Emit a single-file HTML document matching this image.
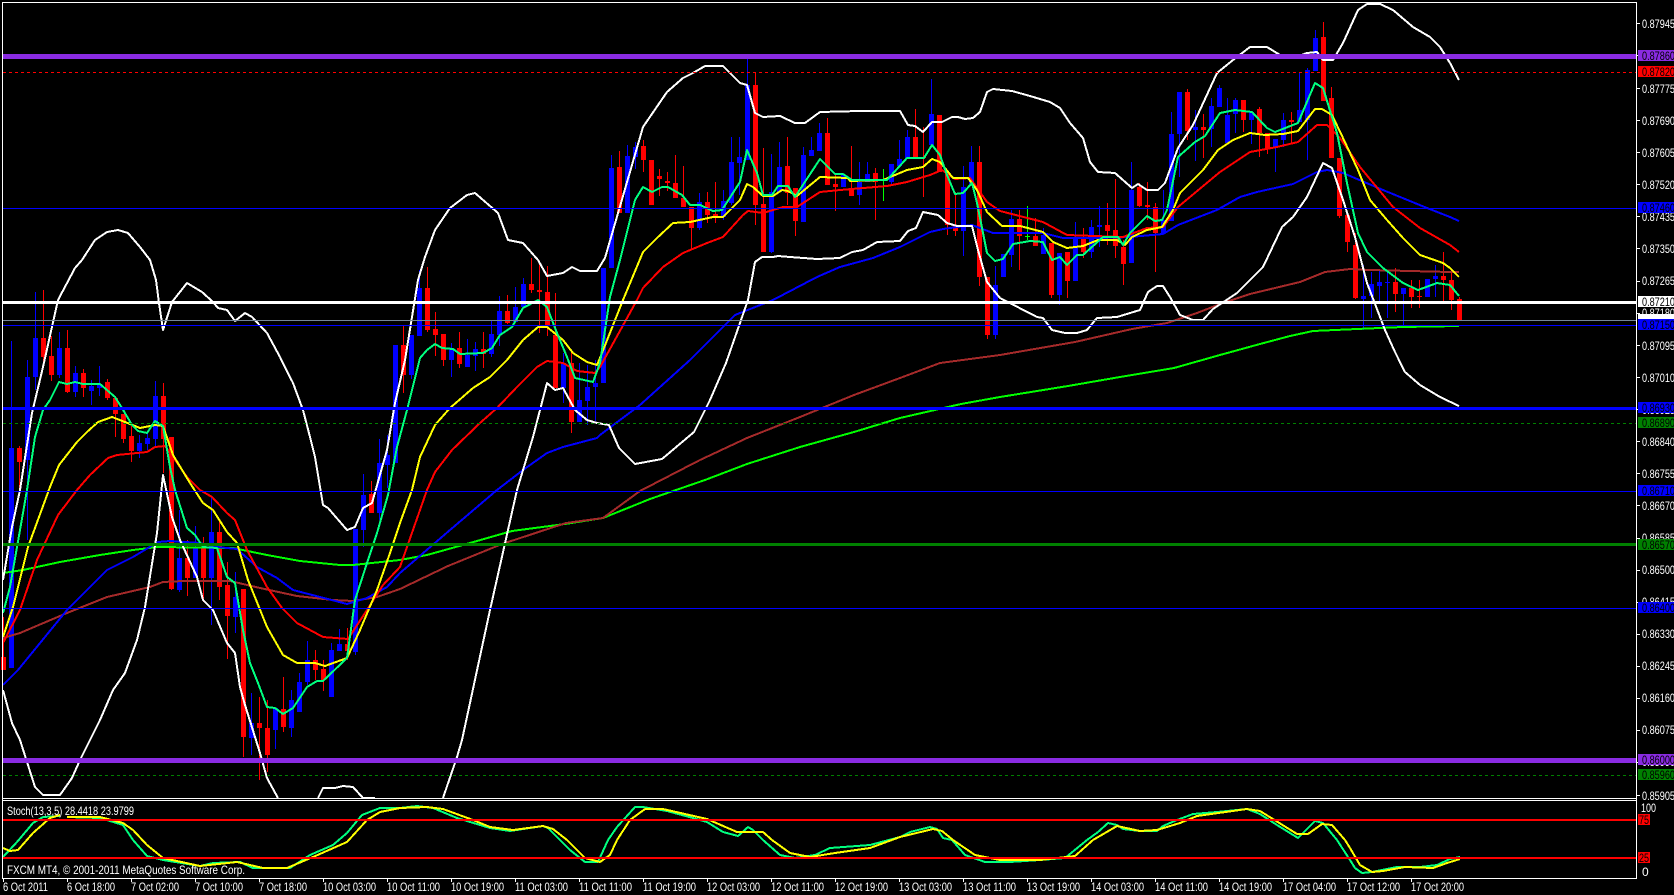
<!DOCTYPE html>
<html><head><meta charset="utf-8"><title>Chart</title>
<style>
html,body{margin:0;padding:0;background:#000;width:1674px;height:895px;overflow:hidden}
svg{display:block}
text{font-family:"Liberation Sans",sans-serif;font-size:12px;fill:#fff}
.k{fill:#000}
.l{fill:none;stroke-width:2;shape-rendering:crispEdges;stroke-linejoin:round}
.h{shape-rendering:crispEdges}
</style></head><body>
<svg width="1674" height="895" viewBox="0 0 1674 895" xmlns="http://www.w3.org/2000/svg">
<rect width="1674" height="895" fill="#000"/>
<!-- wicks -->
<path class="h" fill="none" stroke="#00f" stroke-width="1" d="M11.5 341V668M27.5 360V540M35.5 292V390M59.5 332V378M75.5 366V397M91.5 380V405M99.5 366V396M139.5 435V458M147.5 432V450M155.5 381V447M179.5 510V592M195.5 526V578M211.5 497V625M235.5 572V633M251.5 693V755M275.5 708V749M291.5 690V737M299.5 673V712M307.5 641V685M331.5 643V697M339.5 629V651M355.5 529V655M363.5 474V547M379.5 439V520M387.5 435V488M395.5 345V463M411.5 335V379M419.5 270V336M451.5 343V377M467.5 339V367M475.5 342V371M491.5 321V357M499.5 296V346M515.5 287V322M523.5 278V307M563.5 353V403M579.5 363V422M587.5 365V425M595.5 360V421M603.5 268V383M611.5 155V268M627.5 145V213M635.5 142V169M699.5 193V230M723.5 190V220M731.5 137V205M739.5 137V195M747.5 59V160M771.5 154V253M779.5 142V192M803.5 147V222M811.5 137V156M819.5 123V151M843.5 175V187M859.5 162V205M867.5 162V182M891.5 164V185M899.5 140V166M907.5 130V159M931.5 79V145M963.5 166V256M971.5 146V184M995.5 266V339M1003.5 254V277M1011.5 210V267M1043.5 228V254M1059.5 253V305M1075.5 222V281M1091.5 220V258M1099.5 206V247M1131.5 162V263M1163.5 190V233M1171.5 112V221M1179.5 92V177M1195.5 110V161M1211.5 98V147M1219.5 85V107M1227.5 98V143M1235.5 98V133M1251.5 112V144M1275.5 139V172M1283.5 113V147M1299.5 73V122M1307.5 68V160M1315.5 30V71M1363.5 265V330M1371.5 272V318M1379.5 271V303M1387.5 271V318M1403.5 288V325M1427.5 279V297M1435.5 265V297"/>
<path class="h" fill="none" stroke="#f00" stroke-width="1" d="M3.5 617V670M19.5 446V492M43.5 290V367M51.5 336V381M67.5 330V393M83.5 369V397M107.5 379V400M115.5 396V437M123.5 414V443M131.5 426V462M163.5 383V473M171.5 437V590M187.5 540V596M203.5 537V602M219.5 520V600M227.5 562V659M243.5 589V757M259.5 697V780M267.5 700V772M283.5 677V732M315.5 650V680M323.5 660V691M347.5 628V660M371.5 481V513M403.5 326V393M427.5 267V332M435.5 312V356M443.5 334V366M459.5 332V368M483.5 332V368M507.5 295V324M531.5 258V293M539.5 263V333M547.5 266V336M555.5 293V388M571.5 350V433M619.5 151V213M643.5 140V172M651.5 160V205M659.5 169V196M667.5 172V191M675.5 155V198M683.5 166V207M691.5 207V250M707.5 192V223M715.5 182V223M755.5 72V225M763.5 148V252M787.5 137V205M795.5 188V236M827.5 118V185M835.5 175V211M851.5 146V196M875.5 168V220M915.5 109V157M923.5 127V197M939.5 115V172M947.5 172V235M955.5 192V236M979.5 146V286M987.5 277V339M1019.5 210V270M1035.5 218V246M1051.5 243V298M1067.5 252V298M1083.5 228V258M1107.5 203V245M1115.5 179V258M1123.5 240V285M1139.5 183V207M1147.5 182V220M1155.5 203V272M1187.5 89V140M1203.5 114V158M1243.5 100V132M1259.5 107V157M1267.5 133V154M1291.5 112V143M1323.5 22V101M1331.5 87V158M1339.5 158V218M1347.5 215V252M1355.5 233V299M1395.5 268V312M1411.5 280V308M1419.5 280V308M1443.5 252V303M1451.5 270V310M1459.5 297V320"/>
<path class="h" fill="none" stroke="#0f0" stroke-width="1" d="M883.5 169V201M1027.5 206V240"/>
<!-- bodies -->
<path class="h" fill="none" stroke="#00f" stroke-width="5" d="M11.5 448V668M27.5 377V460M35.5 338V377M59.5 348V375M75.5 373V392M91.5 386V391M99.5 384V388M139.5 443V451M147.5 438V444M155.5 396V439M179.5 558V590M195.5 547V578M211.5 532V578M235.5 597V617M251.5 723V738M275.5 708V730M291.5 700V728M299.5 682V712M307.5 660V682M331.5 650V697M339.5 644V651M355.5 529V652M363.5 495V530M379.5 463V513M387.5 455V465M395.5 345V463M411.5 335V375M419.5 288V336M451.5 348V360M467.5 355V367M475.5 349V356M491.5 334V354M499.5 311V335M515.5 307V322M523.5 284V307M563.5 363V388M579.5 400V422M587.5 387V401M595.5 383V387M603.5 268V383M611.5 168V268M627.5 156V213M635.5 147V157M699.5 202V228M723.5 201V217M731.5 162V203M739.5 157V163M747.5 85V160M771.5 192V252M779.5 167V192M803.5 155V222M811.5 150V156M819.5 133V151M843.5 175V187M859.5 182V195M867.5 174V182M891.5 164V182M899.5 159V166M907.5 137V159M931.5 114V145M963.5 187V231M971.5 162V184M995.5 285V335M1003.5 254V277M1011.5 219V255M1043.5 235V254M1059.5 253V295M1075.5 237V281M1091.5 227V252M1099.5 225V227M1131.5 190V263M1163.5 220V233M1171.5 134V221M1179.5 92V134M1195.5 127V130M1211.5 106V129M1219.5 88V107M1227.5 115V143M1235.5 100V114M1251.5 112V120M1275.5 139V148M1283.5 120V140M1299.5 110V122M1307.5 70V120M1315.5 38V71M1363.5 296V299M1371.5 284V296M1379.5 282V286M1387.5 282V283M1403.5 288V294M1427.5 279V297M1435.5 276V279"/>
<path class="h" fill="none" stroke="#f00" stroke-width="5" d="M3.5 657V670M19.5 448V462M43.5 338V357M51.5 356V375M67.5 348V392M83.5 373V388M107.5 382V398M115.5 398V414M123.5 414V439M131.5 436V451M163.5 396V439M171.5 437V589M187.5 558V578M203.5 548V578M219.5 532V587M227.5 585V616M243.5 589V737M259.5 723V728M267.5 728V755M283.5 709V727M315.5 660V670M323.5 669V680M347.5 644V651M371.5 494V513M403.5 345V375M427.5 288V330M435.5 329V335M443.5 334V360M459.5 348V364M483.5 349V354M507.5 311V323M531.5 284V290M539.5 290V292M547.5 292V325M555.5 335V388M571.5 363V422M619.5 167V213M643.5 146V160M651.5 160V205M659.5 176V179M667.5 181V183M675.5 183V198M683.5 198V207M691.5 207V228M707.5 202V215M715.5 214V217M755.5 85V205M763.5 204V252M787.5 166V193M795.5 188V221M827.5 133V185M835.5 184V187M851.5 188V196M875.5 173V182M915.5 137V157M923.5 157V158M939.5 115V172M947.5 172V225M955.5 225V231M979.5 162V277M987.5 277V335M1019.5 219V236M1035.5 236V246M1051.5 243V295M1067.5 252V281M1083.5 237V252M1107.5 225V231M1115.5 230V246M1123.5 247V264M1139.5 187V206M1147.5 205V207M1155.5 207V233M1187.5 92V131M1203.5 127V130M1243.5 100V120M1259.5 109V133M1267.5 133V149M1291.5 120V122M1323.5 37V101M1331.5 98V158M1339.5 158V216M1347.5 215V242M1355.5 245V298M1395.5 282V294M1411.5 288V297M1419.5 296V297M1443.5 276V280M1451.5 280V300M1459.5 299V320"/>
<path class="h" fill="none" stroke="#0f0" stroke-width="5" d="M883.5 180V181M1027.5 236V237"/>
<!-- Lime SMA -->
<polyline class="l" stroke="#0f0" points="3,573 23,570 60,562 100,555 133,550 157,547 233,548 267,555 300,561 340,565 353,565 400,560 427,555 470,543 512,531 565,524 603,518 650,499 705,480 747,464 800,447 854,432 900,418 961,404 1000,397 1068,386 1120,377 1174,368 1220,355 1260,344 1290,336 1313,331 1357,329 1403,327 1459,326"/>
<!-- Brown -->
<polyline class="l" stroke="#a52a2a" points="3,638 20,633 67,613 107,597 150,587 163,582 183,581 230,581 260,588 297,596 333,600 353,601 377,597 400,589 448,566 502,544 566,523 603,518 640,491 700,460 747,438 800,417 854,395 900,378 940,363 1000,355 1075,342 1132,329 1167,323 1197,313 1223,303 1250,294 1300,282 1325,272 1350,269 1370,270 1450,272 1459,272"/>
<!-- Blue MA -->
<polyline class="l" stroke="#00f" points="3,685 18,670 67,610 107,570 133,557 158,542 170,541 200,543 217,547 237,549 257,567 277,578 293,590 320,597 347,604 367,598 387,587 400,573 450,530 497,490 523,470 547,453 563,447 597,438 600,435 640,405 690,360 735,315 773,300 817,277 840,267 873,258 900,247 930,232 943,229 972,225 993,233 1043,233 1063,238 1100,238 1130,237 1163,234 1178,225 1217,210 1240,197 1257,192 1293,184 1317,172 1327,170 1343,173 1383,190 1427,208 1450,217 1459,221"/>
<!-- Red MA -->
<polyline class="l" stroke="#f00" points="3,643 20,610 37,560 58,515 77,490 90,475 108,458 117,455 147,452 155,447 165,446 173,457 187,477 200,490 212,497 227,513 235,520 247,550 267,587 282,608 297,623 323,637 348,639 367,610 383,585 400,567 427,490 435,472 452,450 480,423 497,408 517,387 537,367 547,361 563,363 577,371 595,373 600,367 637,300 643,288 663,267 683,253 707,243 723,237 743,215 748,211 763,213 783,207 797,207 820,192 840,190 887,186 907,182 930,175 942,170 955,179 970,178 987,202 1000,211 1043,222 1067,235 1123,237 1147,228 1163,227 1178,207 1220,172 1250,152 1277,147 1298,142 1317,125 1327,125 1340,138 1360,167 1393,207 1420,228 1450,245 1459,252"/>
<!-- Yellow -->
<polyline class="l" stroke="#ff0" points="3,637 13,607 28,547 50,487 59,465 77,442 87,432 98,422 112,417 125,422 140,428 155,425 163,426 173,455 190,483 203,503 213,510 227,532 237,543 248,580 267,627 283,655 297,663 315,663 325,666 347,658 360,630 377,590 390,553 400,523 412,490 420,457 435,425 450,408 473,388 490,377 507,360 523,340 538,327 547,327 563,340 573,353 587,362 597,365 600,358 623,300 643,252 657,238 673,223 690,222 713,217 723,217 740,200 747,184 753,187 763,196 773,196 782,190 788,191 797,196 820,177 848,178 850,181 883,180 907,170 923,167 932,159 940,162 953,178 968,178 977,190 987,212 1002,226 1020,226 1043,232 1053,242 1067,248 1083,246 1098,240 1117,240 1125,245 1132,237 1147,230 1162,227 1173,210 1180,193 1203,170 1218,150 1233,140 1250,133 1265,135 1283,134 1298,131 1315,109 1322,109 1332,115 1343,138 1358,170 1370,200 1387,220 1403,238 1420,255 1443,263 1450,268 1459,277"/>
<!-- Spring green -->
<polyline class="l" stroke="#00ff7f" points="3,613 10,587 20,530 27,490 35,437 43,410 50,400 59,382 67,384 75,382 83,384 100,384 115,397 122,408 132,425 138,431 147,433 155,421 163,426 170,467 175,490 187,528 195,535 203,547 217,548 227,577 235,583 243,630 250,663 258,683 267,707 275,708 283,714 293,708 307,687 317,681 323,681 347,658 355,600 367,563 377,533 388,495 397,447 407,410 420,358 427,350 435,344 442,348 453,349 460,354 483,353 492,348 500,335 512,327 523,308 538,300 547,307 557,333 567,357 575,378 593,382 600,363 610,297 620,260 635,200 643,187 652,192 662,187 668,187 682,195 690,205 700,205 713,211 722,210 740,182 747,150 757,173 763,195 772,195 778,186 788,186 795,197 820,159 835,174 843,174 852,180 887,180 907,158 924,158 932,145 940,155 947,175 955,194 963,193 972,183 977,203 987,253 995,261 1003,259 1013,244 1030,241 1043,242 1052,260 1060,257 1067,265 1077,255 1083,255 1103,237 1118,237 1123,245 1130,233 1147,216 1155,221 1162,220 1167,210 1178,157 1195,142 1205,136 1220,113 1235,110 1252,112 1267,128 1275,132 1298,123 1315,83 1323,88 1337,133 1347,183 1358,233 1367,252 1383,268 1403,283 1418,290 1437,283 1450,285 1459,296"/>
<!-- Bollinger upper -->
<polyline class="l" stroke="#fff" points="3,580 12,527 20,490 32,413 43,367 58,300 75,268 82,260 95,240 107,232 118,230 128,233 140,247 150,260 156,280 159,303 163,330 172,302 187,283 202,292 213,302 218,308 227,310 235,321 245,313 252,317 267,333 280,357 293,383 303,410 310,437 315,457 323,505 328,508 347,530 355,527 363,508 372,503 387,450 395,403 405,360 418,280 425,257 435,230 450,208 467,195 475,193 498,213 508,240 523,243 538,260 547,276 563,273 572,267 580,271 597,271 605,258 643,127 667,92 683,78 693,73 705,66 723,66 740,83 747,85 755,113 763,117 780,116 795,123 805,123 820,112 860,111 900,111 908,125 915,126 923,132 932,122 942,122 952,117 958,117 965,119 973,118 980,112 987,92 993,89 1012,91 1030,96 1050,102 1060,108 1070,123 1083,138 1090,162 1098,172 1115,173 1132,188 1138,184 1147,190 1158,190 1165,183 1178,148 1193,125 1217,73 1233,60 1250,47 1267,47 1280,55 1293,58 1307,53 1317,52 1323,60 1333,60 1343,43 1358,10 1367,4 1380,4 1393,10 1413,27 1430,37 1440,47 1450,63 1459,80"/>
<!-- Bollinger lower -->
<polyline class="l" stroke="#fff" points="3,690 12,723 20,740 35,787 43,795 60,795 72,778 80,760 100,720 113,690 125,673 137,640 145,607 157,533 163,475 172,517 180,540 197,577 203,600 213,610 227,643 235,653 240,687 245,705 260,753 267,778 278,798"/>
<polyline class="l" stroke="#fff" points="318,798 323,788 335,788 343,786 353,787 363,798 375,798"/>
<polyline class="l" stroke="#fff" points="443,798 457,757 462,740 490,610 517,490 533,437 540,410 547,383 555,390 563,388 575,410 587,420 597,423 609,425 619,448 635,464 662,459 694,432 710,400 726,363 748,300 755,262 762,257 773,257 778,256 790,257 817,259 840,258 852,252 863,250 877,242 900,241 908,231 916,228 923,212 938,215 947,223 957,226 972,226 978,250 987,282 1000,298 1037,317 1043,318 1052,330 1065,333 1077,333 1087,330 1097,318 1117,317 1140,310 1148,292 1157,286 1163,286 1170,297 1180,315 1193,320 1203,320 1213,309 1222,303 1237,293 1263,267 1282,227 1293,217 1307,197 1323,163 1332,168 1343,200 1355,237 1367,283 1385,330 1395,352 1405,372 1420,385 1440,397 1459,406"/>
<!-- horizontal lines -->
<g class="h" shape-rendering="crispEdges">
<rect x="3" y="54" width="1633" height="5" fill="#8a2be2"/>
<line x1="3" y1="72.5" x2="1636" y2="72.5" stroke="#f00" stroke-dasharray="3 3"/>
<rect x="3" y="208" width="1633" height="1" fill="#00f"/>
<rect x="3" y="301" width="1633" height="3" fill="#fff"/>
<rect x="3" y="320" width="1633" height="1" fill="#778899"/>
<rect x="3" y="325" width="1633" height="1" fill="#00f"/>
<rect x="3" y="407" width="1633" height="3" fill="#00f"/>
<line x1="3" y1="423.5" x2="1636" y2="423.5" stroke="#008000" stroke-dasharray="3 3"/>
<rect x="3" y="491" width="1633" height="1" fill="#00f"/>
<rect x="3" y="543" width="1633" height="3" fill="#008000"/>
<rect x="3" y="608" width="1633" height="1" fill="#00f"/>
<rect x="3" y="758" width="1633" height="5" fill="#8a2be2"/>
<line x1="3" y1="775.5" x2="1636" y2="775.5" stroke="#008000" stroke-dasharray="3 3"/>
</g>
<!-- stochastic -->
<polyline class="l" stroke="#00ff7f" points="3,857 17,842 33,823 43,817 60,816"/>
<polyline class="l" stroke="#ff0" points="3,848 10,851 18,850 33,833 50,818 60,815"/>
<polyline class="l" stroke="#00ff7f" points="67,817 100,818 110,821 123,825 133,840 147,856 163,860 200,866 213,863 240,862 253,868 290,868 310,855 333,845 347,833 362,815 380,808 400,808 417,806 433,808 457,818 490,828 510,831 543,826 548,828 560,840 570,850 585,862 598,862 608,840 617,827 635,807 643,807 667,811 693,818 707,822 723,832 738,836 748,827 753,830 763,840 780,855 795,858 815,855 830,848 870,845 900,837 910,832 930,827 937,829 943,838 952,840 965,855 985,862 1010,862 1040,860 1065,858 1087,840 1098,832 1108,823 1117,825 1123,829 1140,831 1157,831 1163,826 1177,820 1193,814 1217,812 1247,809 1260,814 1277,825 1298,838 1315,821 1323,823 1337,840 1350,860 1355,868 1362,873 1372,872 1397,867 1420,867 1437,865 1450,859 1460,857"/>
<polyline class="l" stroke="#ff0" points="67,817 100,817 123,823 133,830 147,845 163,858 200,866 237,862 263,868 287,868 313,857 347,842 367,820 380,812 400,808 427,807 443,809 473,820 490,827 513,830 543,826 553,829 567,840 585,858 600,862 610,855 617,840 630,820 645,809 663,809 707,819 737,832 763,832 772,840 790,853 810,857 835,853 870,848 900,837 933,829 942,831 953,840 975,855 1000,860 1040,860 1075,856 1093,840 1117,826 1140,831 1157,830 1180,823 1197,816 1247,809 1260,811 1297,834 1308,834 1322,824 1332,825 1345,840 1350,848 1360,865 1372,872 1383,871 1405,867 1433,868 1447,863 1460,859"/>
<g shape-rendering="crispEdges">
<rect x="3" y="819" width="1633" height="2" fill="#f00"/>
<rect x="3" y="857" width="1633" height="2" fill="#f00"/>
<!-- frame -->
<rect x="2" y="2" width="1635" height="1" fill="#fff"/>
<rect x="2" y="2" width="1" height="877" fill="#fff"/>
<rect x="1636" y="2" width="1" height="877" fill="#fff"/>
<rect x="2" y="798" width="1635" height="1" fill="#fff"/>
<rect x="2" y="800" width="1635" height="1" fill="#fff"/>
<rect x="2" y="878" width="1635" height="1" fill="#fff"/>
<path fill="none" stroke="#fff" d="M1637 23.500H1640M1637 55.500H1640M1637 88.500H1640M1637 120.500H1640M1637 152.500H1640M1637 184.500H1640M1637 216.500H1640M1637 248.500H1640M1637 281.500H1640M1637 313.500H1640M1637 345.500H1640M1637 377.500H1640M1637 409.500H1640M1637 441.500H1640M1637 473.500H1640M1637 505.500H1640M1637 538.500H1640M1637 570.500H1640M1637 602.500H1640M1637 634.500H1640M1637 666.500H1640M1637 698.500H1640M1637 730.500H1640M1637 762.500H1640M1637 795.500H1640"/>
<path fill="none" stroke="#fff" d="M3.500 879V882M67.500 879V882M131.500 879V882M195.500 879V882M259.500 879V882M323.500 879V882M387.500 879V882M451.500 879V882M515.500 879V882M579.500 879V882M643.500 879V882M707.500 879V882M771.500 879V882M835.500 879V882M899.500 879V882M963.500 879V882M1027.500 879V882M1091.500 879V882M1155.500 879V882M1219.500 879V882M1283.500 879V882M1347.500 879V882M1411.500 879V882"/>
</g>
<!-- price scale -->
<g>
<text x="1642" y="28" textLength="33" lengthAdjust="spacingAndGlyphs">0.87945</text>
<text x="1642" y="60" textLength="33" lengthAdjust="spacingAndGlyphs">0.87860</text>
<text x="1642" y="93" textLength="33" lengthAdjust="spacingAndGlyphs">0.87775</text>
<text x="1642" y="125" textLength="33" lengthAdjust="spacingAndGlyphs">0.87690</text>
<text x="1642" y="157" textLength="33" lengthAdjust="spacingAndGlyphs">0.87605</text>
<text x="1642" y="189" textLength="33" lengthAdjust="spacingAndGlyphs">0.87520</text>
<text x="1642" y="221" textLength="33" lengthAdjust="spacingAndGlyphs">0.87435</text>
<text x="1642" y="253" textLength="33" lengthAdjust="spacingAndGlyphs">0.87350</text>
<text x="1642" y="285" textLength="33" lengthAdjust="spacingAndGlyphs">0.87265</text>
<text x="1642" y="317" textLength="33" lengthAdjust="spacingAndGlyphs">0.87180</text>
<text x="1642" y="350" textLength="33" lengthAdjust="spacingAndGlyphs">0.87095</text>
<text x="1642" y="382" textLength="33" lengthAdjust="spacingAndGlyphs">0.87010</text>
<text x="1642" y="414" textLength="33" lengthAdjust="spacingAndGlyphs">0.86925</text>
<text x="1642" y="446" textLength="33" lengthAdjust="spacingAndGlyphs">0.86840</text>
<text x="1642" y="478" textLength="33" lengthAdjust="spacingAndGlyphs">0.86755</text>
<text x="1642" y="510" textLength="33" lengthAdjust="spacingAndGlyphs">0.86670</text>
<text x="1642" y="542" textLength="33" lengthAdjust="spacingAndGlyphs">0.86585</text>
<text x="1642" y="574" textLength="33" lengthAdjust="spacingAndGlyphs">0.86500</text>
<text x="1642" y="606" textLength="33" lengthAdjust="spacingAndGlyphs">0.86415</text>
<text x="1642" y="638" textLength="33" lengthAdjust="spacingAndGlyphs">0.86330</text>
<text x="1642" y="670" textLength="33" lengthAdjust="spacingAndGlyphs">0.86245</text>
<text x="1642" y="702" textLength="33" lengthAdjust="spacingAndGlyphs">0.86160</text>
<text x="1642" y="734" textLength="33" lengthAdjust="spacingAndGlyphs">0.86075</text>
<text x="1642" y="766" textLength="33" lengthAdjust="spacingAndGlyphs">0.85990</text>
<text x="1642" y="800" textLength="33" lengthAdjust="spacingAndGlyphs">0.85905</text>
</g>
<!-- coloured price labels -->
<g shape-rendering="crispEdges">
<rect x="1638" y="50" width="36" height="11" fill="#8a2be2"/>
<rect x="1638" y="66" width="36" height="11" fill="#f00"/>
<rect x="1638" y="202" width="36" height="11" fill="#00f"/>
<rect x="1638" y="296" width="36" height="11" fill="#fff"/>
<rect x="1638" y="314" width="36" height="11" fill="#fff"/>
<rect x="1638" y="319" width="36" height="11" fill="#00f"/>
<rect x="1638" y="402" width="36" height="11" fill="#00f"/>
<rect x="1638" y="417" width="36" height="11" fill="#008000"/>
<rect x="1638" y="485" width="36" height="11" fill="#00f"/>
<rect x="1638" y="539" width="36" height="11" fill="#008000"/>
<rect x="1638" y="602" width="36" height="11" fill="#00f"/>
<rect x="1638" y="754" width="36" height="11" fill="#8a2be2"/>
<rect x="1638" y="769" width="36" height="11" fill="#008000"/>
<rect x="1638" y="814" width="12" height="11" fill="#f00"/>
<rect x="1638" y="852" width="12" height="11" fill="#f00"/>
</g>
<g>
<text class="k" x="1642" y="60" textLength="33" lengthAdjust="spacingAndGlyphs">0.87860</text>
<text class="k" x="1642" y="76" textLength="33" lengthAdjust="spacingAndGlyphs">0.87820</text>
<text class="k" x="1642" y="212" textLength="33" lengthAdjust="spacingAndGlyphs">0.87460</text>
<text class="k" x="1642" y="306" textLength="33" lengthAdjust="spacingAndGlyphs">0.87210</text>
<text class="k" x="1642" y="329" textLength="33" lengthAdjust="spacingAndGlyphs">0.87150</text>
<text class="k" x="1642" y="412" textLength="33" lengthAdjust="spacingAndGlyphs">0.86930</text>
<text class="k" x="1642" y="427" textLength="33" lengthAdjust="spacingAndGlyphs">0.86890</text>
<text class="k" x="1642" y="495" textLength="33" lengthAdjust="spacingAndGlyphs">0.86710</text>
<text class="k" x="1642" y="549" textLength="33" lengthAdjust="spacingAndGlyphs">0.86570</text>
<text class="k" x="1642" y="612" textLength="33" lengthAdjust="spacingAndGlyphs">0.86400</text>
<text class="k" x="1642" y="764" textLength="33" lengthAdjust="spacingAndGlyphs">0.86000</text>
<text class="k" x="1642" y="779" textLength="33" lengthAdjust="spacingAndGlyphs">0.85960</text>
<text x="1641" y="812" textLength="15" lengthAdjust="spacingAndGlyphs">100</text>
<text class="k" x="1639" y="824" textLength="10" lengthAdjust="spacingAndGlyphs">75</text>
<text class="k" x="1639" y="862" textLength="10" lengthAdjust="spacingAndGlyphs">25</text>
<text x="1642" y="876">0</text>
<!-- indicator + copyright -->
<text x="7" y="815" textLength="127" lengthAdjust="spacingAndGlyphs">Stoch(13,3,5) 28.4418 23.9799</text>
<text x="7" y="874" textLength="238" lengthAdjust="spacingAndGlyphs">FXCM MT4, © 2001-2011 MetaQuotes Software Corp.</text>
<!-- time axis -->
<text x="3" y="891" textLength="45" lengthAdjust="spacingAndGlyphs">6 Oct 2011</text>
<text x="67" y="891" textLength="48" lengthAdjust="spacingAndGlyphs">6 Oct 18:00</text>
<text x="131" y="891" textLength="48" lengthAdjust="spacingAndGlyphs">7 Oct 02:00</text>
<text x="195" y="891" textLength="48" lengthAdjust="spacingAndGlyphs">7 Oct 10:00</text>
<text x="259" y="891" textLength="48" lengthAdjust="spacingAndGlyphs">7 Oct 18:00</text>
<text x="323" y="891" textLength="53" lengthAdjust="spacingAndGlyphs">10 Oct 03:00</text>
<text x="387" y="891" textLength="53" lengthAdjust="spacingAndGlyphs">10 Oct 11:00</text>
<text x="451" y="891" textLength="53" lengthAdjust="spacingAndGlyphs">10 Oct 19:00</text>
<text x="515" y="891" textLength="53" lengthAdjust="spacingAndGlyphs">11 Oct 03:00</text>
<text x="579" y="891" textLength="53" lengthAdjust="spacingAndGlyphs">11 Oct 11:00</text>
<text x="643" y="891" textLength="53" lengthAdjust="spacingAndGlyphs">11 Oct 19:00</text>
<text x="707" y="891" textLength="53" lengthAdjust="spacingAndGlyphs">12 Oct 03:00</text>
<text x="771" y="891" textLength="53" lengthAdjust="spacingAndGlyphs">12 Oct 11:00</text>
<text x="835" y="891" textLength="53" lengthAdjust="spacingAndGlyphs">12 Oct 19:00</text>
<text x="899" y="891" textLength="53" lengthAdjust="spacingAndGlyphs">13 Oct 03:00</text>
<text x="963" y="891" textLength="53" lengthAdjust="spacingAndGlyphs">13 Oct 11:00</text>
<text x="1027" y="891" textLength="53" lengthAdjust="spacingAndGlyphs">13 Oct 19:00</text>
<text x="1091" y="891" textLength="53" lengthAdjust="spacingAndGlyphs">14 Oct 03:00</text>
<text x="1155" y="891" textLength="53" lengthAdjust="spacingAndGlyphs">14 Oct 11:00</text>
<text x="1219" y="891" textLength="53" lengthAdjust="spacingAndGlyphs">14 Oct 19:00</text>
<text x="1283" y="891" textLength="53" lengthAdjust="spacingAndGlyphs">17 Oct 04:00</text>
<text x="1347" y="891" textLength="53" lengthAdjust="spacingAndGlyphs">17 Oct 12:00</text>
<text x="1411" y="891" textLength="53" lengthAdjust="spacingAndGlyphs">17 Oct 20:00</text>
</g>
</svg>
</body></html>
